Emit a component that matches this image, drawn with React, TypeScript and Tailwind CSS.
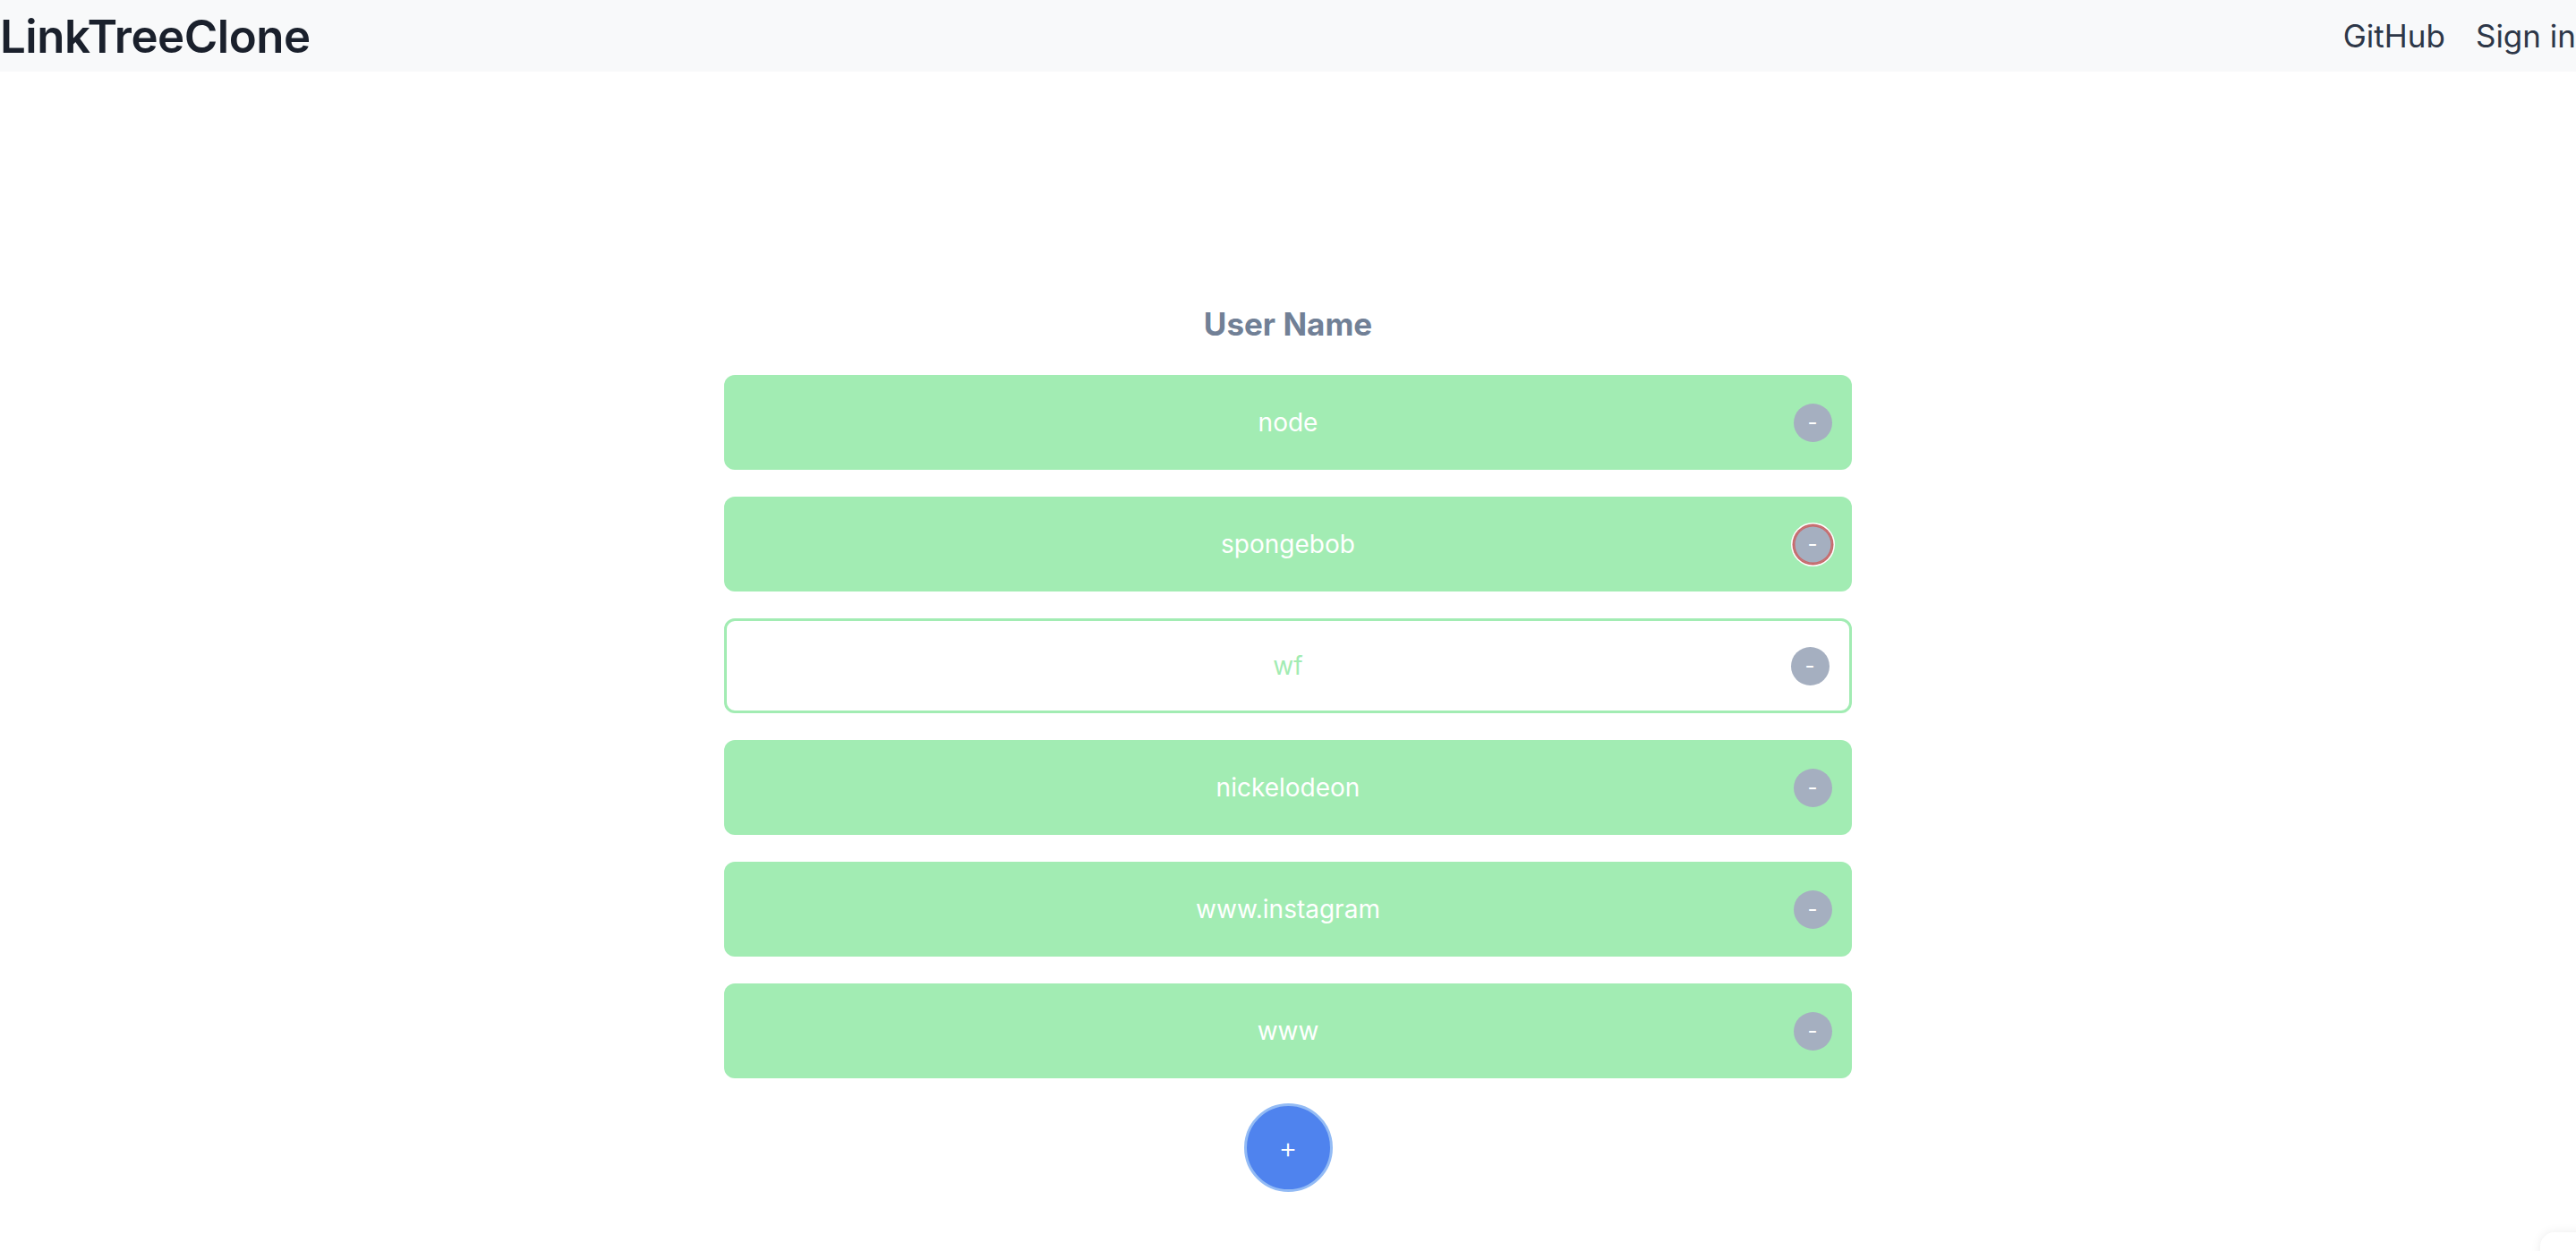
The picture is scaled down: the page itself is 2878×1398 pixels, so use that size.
const links = [
  { label: "node", variant: "solid" },
  { label: "spongebob", variant: "solid", focused: true },
  { label: "wf", variant: "outline" },
  { label: "nickelodeon", variant: "solid" },
  { label: "www.instagram", variant: "solid" },
  { label: "www", variant: "solid" },
];

function LinkRow({ label, variant, focused }: { label: string; variant: string; focused?: boolean }) {
  const solid = variant === "solid";
  return (
    <li
      className={
        solid
          ? "grid h-[106px] grid-cols-[88px_1fr_88px] items-center rounded-xl bg-[#a2ecb3] text-white"
          : "grid h-[106px] grid-cols-[88px_1fr_88px] items-center rounded-xl border-[3px] border-[#a2ecb3] bg-white text-[#a2ecb3]"
      }
    >
      <span />
      <span className="text-center text-[28px] leading-none">{label}</span>
      <button
        className={
          focused
            ? "flex h-[43px] w-[43px] items-center justify-center justify-self-center rounded-full bg-[#a5afc0] text-[24px] leading-none text-white ring-[1.5px] ring-[#c9696a] inset-ring-[1.5px] inset-ring-[#c9696a] shadow-[0_0_0_3px_#ffffff]"
            : "flex h-[43px] w-[43px] items-center justify-center justify-self-center rounded-full bg-[#a5afc0] text-[24px] leading-none text-white"
        }
      >
        -
      </button>
    </li>
  );
}

export default function App() {
  return (
    <div className="min-h-screen overflow-hidden bg-white font-['Inter','Liberation_Sans',sans-serif]">
      <header className="flex h-[80px] items-center justify-between bg-[#f8f9fa]">
        <h1 className="text-[51px] font-semibold leading-none tracking-[-0.5px] text-[#1a202c]">
          LinkTreeClone
        </h1>
        <nav className="flex items-center gap-[34px] text-[35px] leading-none text-[#2d3748]">
          <a href="#">GitHub</a>
          <a href="#" className="whitespace-nowrap">Sign in</a>
        </nav>
      </header>

      <main className="flex flex-col items-center pt-[260px]">
        <h2 className="text-[35px] font-bold leading-[44px] text-[#718096]">User Name</h2>
        <ul className="mt-[35px] flex w-[1260px] flex-col gap-[30px]">
          {links.map((l) => (
            <LinkRow key={l.label} {...l} />
          ))}
        </ul>
        <button className="mt-[28px] flex h-[99px] w-[99px] items-center justify-center rounded-full border-[3px] border-[#93bbf5] bg-[#4f83ee] text-[32px] font-light leading-none text-white">
          +
        </button>
      </main>

      <div className="fixed bottom-[-40px] right-[-40px] h-[61px] w-[80px] rounded-tl-2xl bg-white shadow-[0_0_12px_rgba(0,0,0,0.08)]" />
    </div>
  );
}
